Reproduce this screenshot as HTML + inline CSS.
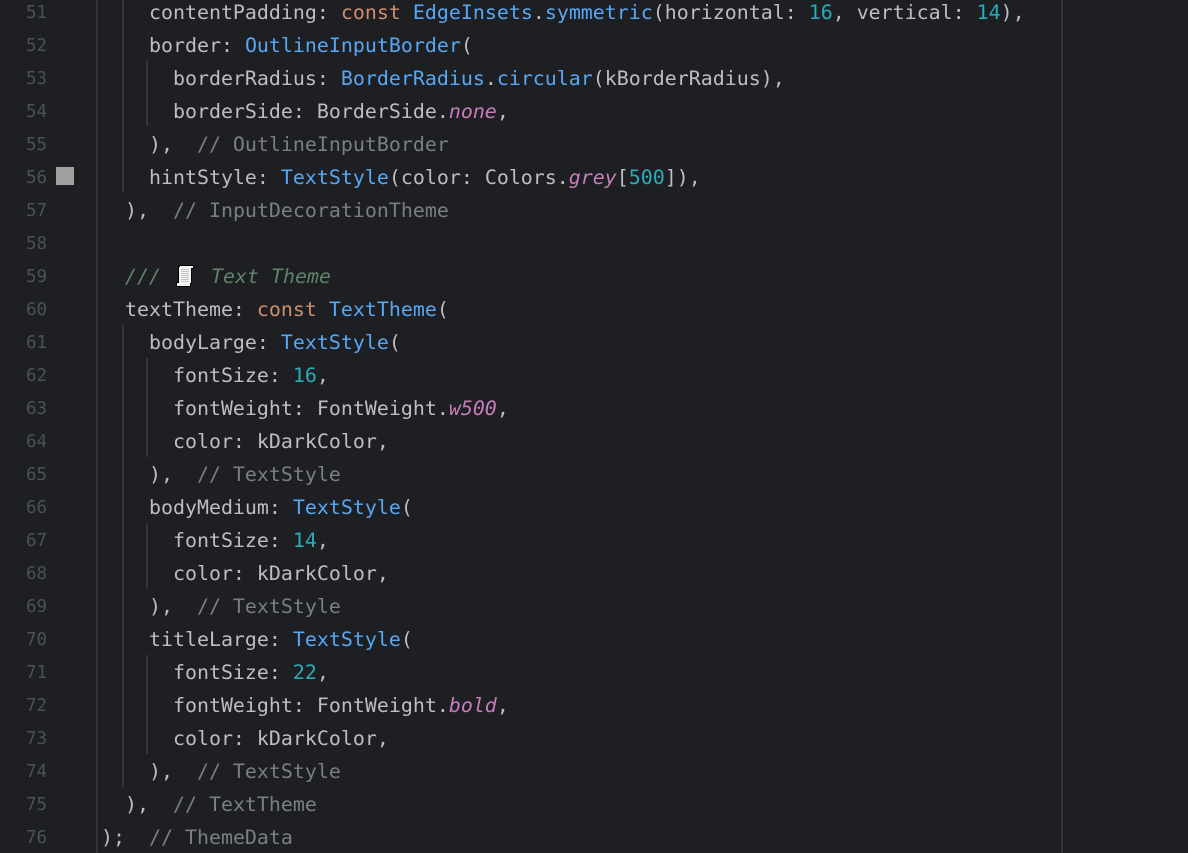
<!DOCTYPE html>
<html lang="en">
<head>
<meta charset="utf-8">
<title>Theme code</title>
<style>
html,body{margin:0;padding:0;background:#1e1f22;}
#p{position:relative;width:1188px;height:853px;overflow:hidden;background:#1e1f22;font-family:"DejaVu Sans Mono","Liberation Mono",monospace;}
.l{position:absolute;left:101px;height:33px;line-height:33px;font-size:19.93px;color:#bcbec4;white-space:pre;margin:0;}
.n{position:absolute;left:26px;height:33px;line-height:33px;margin-top:1px;font-size:17.5px;color:#4b5059;white-space:pre;}
.g{position:absolute;width:2px;background:#313438;}
.k{color:#cf8e6d}.b{color:#56a8f5}.t{color:#2aacb8}.c{color:#7a7e85}.d{color:#5f826b;font-style:italic}.i{color:#c77dbb;font-style:italic}
</style>
</head>
<body>
<div id="p">
<div class="g" style="left:96px;top:0;height:853px"></div>
<div class="g" style="left:1061px;top:0;height:853px"></div>
<div class="g" style="left:122px;top:0;height:192px"></div>
<div class="g" style="left:122px;top:325px;height:462px"></div>
<div class="g" style="left:146px;top:60px;height:66px"></div>
<div class="g" style="left:146px;top:358px;height:99px"></div>
<div class="g" style="left:146px;top:523px;height:66px"></div>
<div class="g" style="left:146px;top:655px;height:99px"></div>
<div style="position:absolute;left:56px;top:167px;width:18px;height:18px;background:#a0a0a0"></div>

<span class="n" style="top:-4px">51</span>
<span class="n" style="top:29px">52</span>
<span class="n" style="top:62px">53</span>
<span class="n" style="top:95px">54</span>
<span class="n" style="top:128px">55</span>
<span class="n" style="top:161px">56</span>
<span class="n" style="top:194px">57</span>
<span class="n" style="top:227px">58</span>
<span class="n" style="top:260px">59</span>
<span class="n" style="top:293px">60</span>
<span class="n" style="top:326px">61</span>
<span class="n" style="top:359px">62</span>
<span class="n" style="top:392px">63</span>
<span class="n" style="top:425px">64</span>
<span class="n" style="top:458px">65</span>
<span class="n" style="top:491px">66</span>
<span class="n" style="top:524px">67</span>
<span class="n" style="top:557px">68</span>
<span class="n" style="top:590px">69</span>
<span class="n" style="top:623px">70</span>
<span class="n" style="top:656px">71</span>
<span class="n" style="top:689px">72</span>
<span class="n" style="top:722px">73</span>
<span class="n" style="top:755px">74</span>
<span class="n" style="top:788px">75</span>
<span class="n" style="top:821px">76</span>

<div class="l" style="top:-4px">    contentPadding: <span class="k">const</span> <span class="b">EdgeInsets</span>.<span class="b">symmetric</span>(horizontal: <span class="t">16</span>, vertical: <span class="t">14</span>),</div>
<div class="l" style="top:29px">    border: <span class="b">OutlineInputBorder</span>(</div>
<div class="l" style="top:62px">      borderRadius: <span class="b">BorderRadius</span>.<span class="b">circular</span>(kBorderRadius),</div>
<div class="l" style="top:95px">      borderSide: BorderSide.<span class="i">none</span>,</div>
<div class="l" style="top:128px">    ),  <span class="c">// OutlineInputBorder</span></div>
<div class="l" style="top:161px">    hintStyle: <span class="b">TextStyle</span>(color: Colors.<span class="i">grey</span>[<span class="t">500</span>]),</div>
<div class="l" style="top:194px">  ),  <span class="c">// InputDecorationTheme</span></div>
<div class="l" style="top:260px">  <span class="d">///</span></div>
<div class="l" style="top:260px;left:211px"><span class="d">Text Theme</span></div>
<svg style="position:absolute;left:176px;top:265px" width="18" height="22" viewBox="0 0 18 22" shape-rendering="crispEdges" aria-hidden="true">
<path d="M3 0H18V4H16V19H15V22H0V17H2V1H3Z" fill="#000"/>
<path d="M4 1H17V3H15V18H14V21H1V18H3V2H4Z" fill="#f4f4f4"/>
<path d="M5 4H13V5H5ZM5 6H13V7H5ZM5 8H13V9H5ZM5 10H13V11H5ZM5 12H13V13H5ZM5 14H13V15H5ZM5 16H13V17H5Z" fill="#c4c4c4"/>
</svg>
<div class="l" style="top:293px">  textTheme: <span class="k">const</span> <span class="b">TextTheme</span>(</div>
<div class="l" style="top:326px">    bodyLarge: <span class="b">TextStyle</span>(</div>
<div class="l" style="top:359px">      fontSize: <span class="t">16</span>,</div>
<div class="l" style="top:392px">      fontWeight: FontWeight.<span class="i">w500</span>,</div>
<div class="l" style="top:425px">      color: kDarkColor,</div>
<div class="l" style="top:458px">    ),  <span class="c">// TextStyle</span></div>
<div class="l" style="top:491px">    bodyMedium: <span class="b">TextStyle</span>(</div>
<div class="l" style="top:524px">      fontSize: <span class="t">14</span>,</div>
<div class="l" style="top:557px">      color: kDarkColor,</div>
<div class="l" style="top:590px">    ),  <span class="c">// TextStyle</span></div>
<div class="l" style="top:623px">    titleLarge: <span class="b">TextStyle</span>(</div>
<div class="l" style="top:656px">      fontSize: <span class="t">22</span>,</div>
<div class="l" style="top:689px">      fontWeight: FontWeight.<span class="i">bold</span>,</div>
<div class="l" style="top:722px">      color: kDarkColor,</div>
<div class="l" style="top:755px">    ),  <span class="c">// TextStyle</span></div>
<div class="l" style="top:788px">  ),  <span class="c">// TextTheme</span></div>
<div class="l" style="top:821px">);  <span class="c">// ThemeData</span></div>
</div>
</body>
</html>
